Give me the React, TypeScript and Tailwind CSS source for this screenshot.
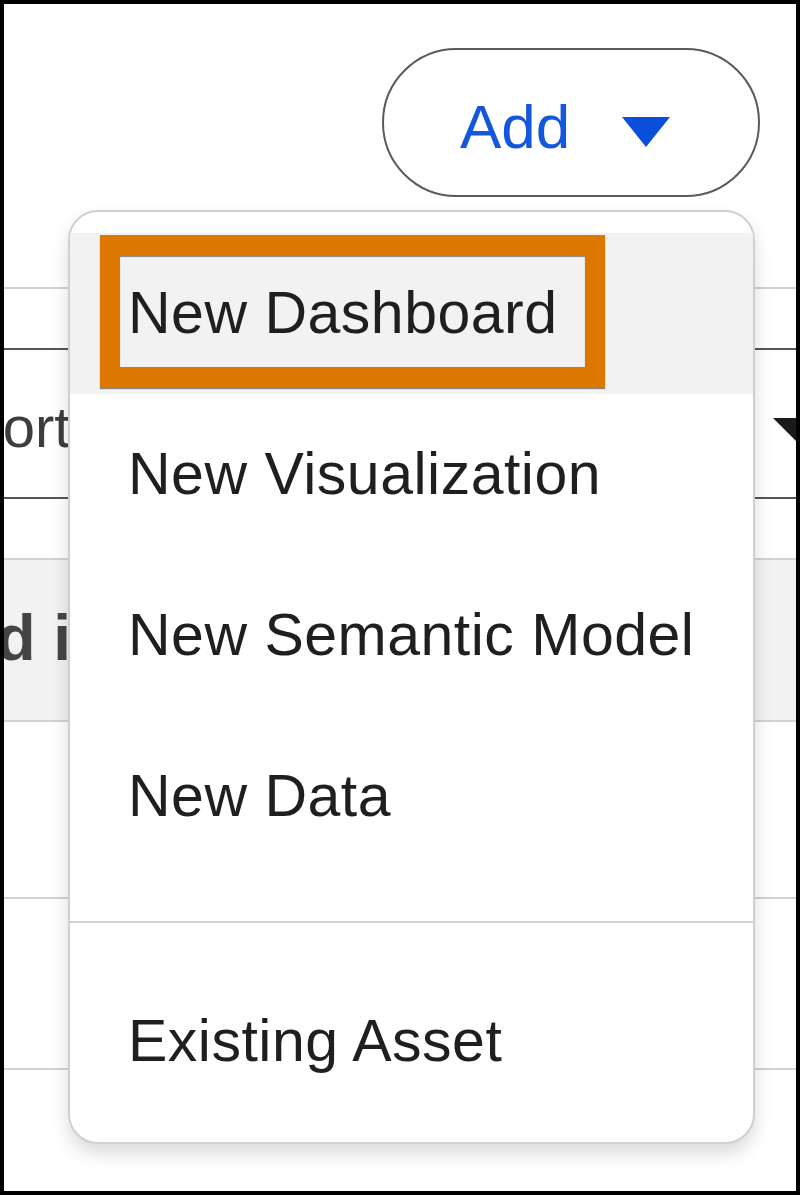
import React from "react";

const font = { fontFamily: '"Liberation Sans", Arial, sans-serif' };

function MenuItem({ label, active }: { label: string; active?: boolean }) {
  return (
    <div
      className={`relative h-[161px] pl-[58px] text-[59px] tracking-[0.5px] leading-[161px] text-[#1f1f1f] whitespace-nowrap ${
        active ? "bg-[#f2f2f2]" : ""
      }`}
    >
      {active && (
        <div className="absolute left-[30px] top-[2px] w-[505px] h-[152px] border-[20px] border-[#dc7800] shadow-[0_2px_1px_rgba(0,0,0,0.45),inset_0_2px_1px_rgba(0,0,0,0.45)]" />
      )}
      <span className="relative">{label}</span>
    </div>
  );
}

export default function App() {
  return (
    <div
      className="relative w-[800px] h-[1195px] border-4 border-black bg-white overflow-hidden"
      style={font}
    >
      {/* background page */}
      <div className="flex flex-col">
        <div className="h-[283px] flex justify-end pr-[36px]">
          <button className="mt-[44px] w-[378px] h-[149px] rounded-full border-2 border-[#5a5a5a] flex items-center pl-[76px] bg-white">
            <span className="mt-[8px] text-[62px] text-[#1358dc] leading-none">Add</span>
            <svg className="ml-[52px] mt-[19px]" width="48" height="30" viewBox="0 0 48 30">
              <polygon points="0,0 48,0 24,30" fill="#0a4fdc" />
            </svg>
          </button>
        </div>
        <div className="h-[2px] bg-[#d2d2d2]" />
        <div className="h-[59px]" />
        <div className="border-y-2 border-[#555] h-[151px] flex justify-between overflow-hidden">
          <span className="ml-[-40px] pt-[7px] text-[58px] leading-[140px] text-[#3d3d3d] whitespace-nowrap">
            Sort by: Name
          </span>
          <svg className="mt-[68px] mr-[-37px] shrink-0" width="60" height="30" viewBox="0 0 60 30">
            <polygon points="0,0 60,0 30,30" fill="#1a1a1a" />
          </svg>
        </div>
        <div className="h-[59px]" />
        <div className="h-[2px] bg-[#d2d2d2]" />
        <div className="h-[160px] bg-[#f2f2f2] overflow-hidden">
          <span className="block ml-[-157px] text-[64px] font-bold leading-[156px] text-[#454545] whitespace-nowrap">
            Saved in workspace
          </span>
        </div>
        <div className="h-[2px] bg-[#d2d2d2]" />
        <div className="h-[175px]" />
        <div className="h-[2px] bg-[#d2d2d2]" />
        <div className="h-[169px]" />
        <div className="h-[2px] bg-[#d2d2d2]" />
      </div>

      {/* dropdown menu overlay */}
      <div className="absolute left-[64px] top-[206px] w-[687px] rounded-[30px] border-2 border-[#cfcfcf] bg-white shadow-[0_10px_18px_rgba(0,0,0,0.14)] pt-[21px] pb-[20px]">
        <MenuItem label="New Dashboard" active />
        <MenuItem label="New Visualization" />
        <MenuItem label="New Semantic Model" />
        <MenuItem label="New Data" />
        <div className="mt-[44px] mb-[38px] h-[2px] bg-[#d2d2d2]" />
        <MenuItem label="Existing Asset" />
      </div>
    </div>
  );
}
